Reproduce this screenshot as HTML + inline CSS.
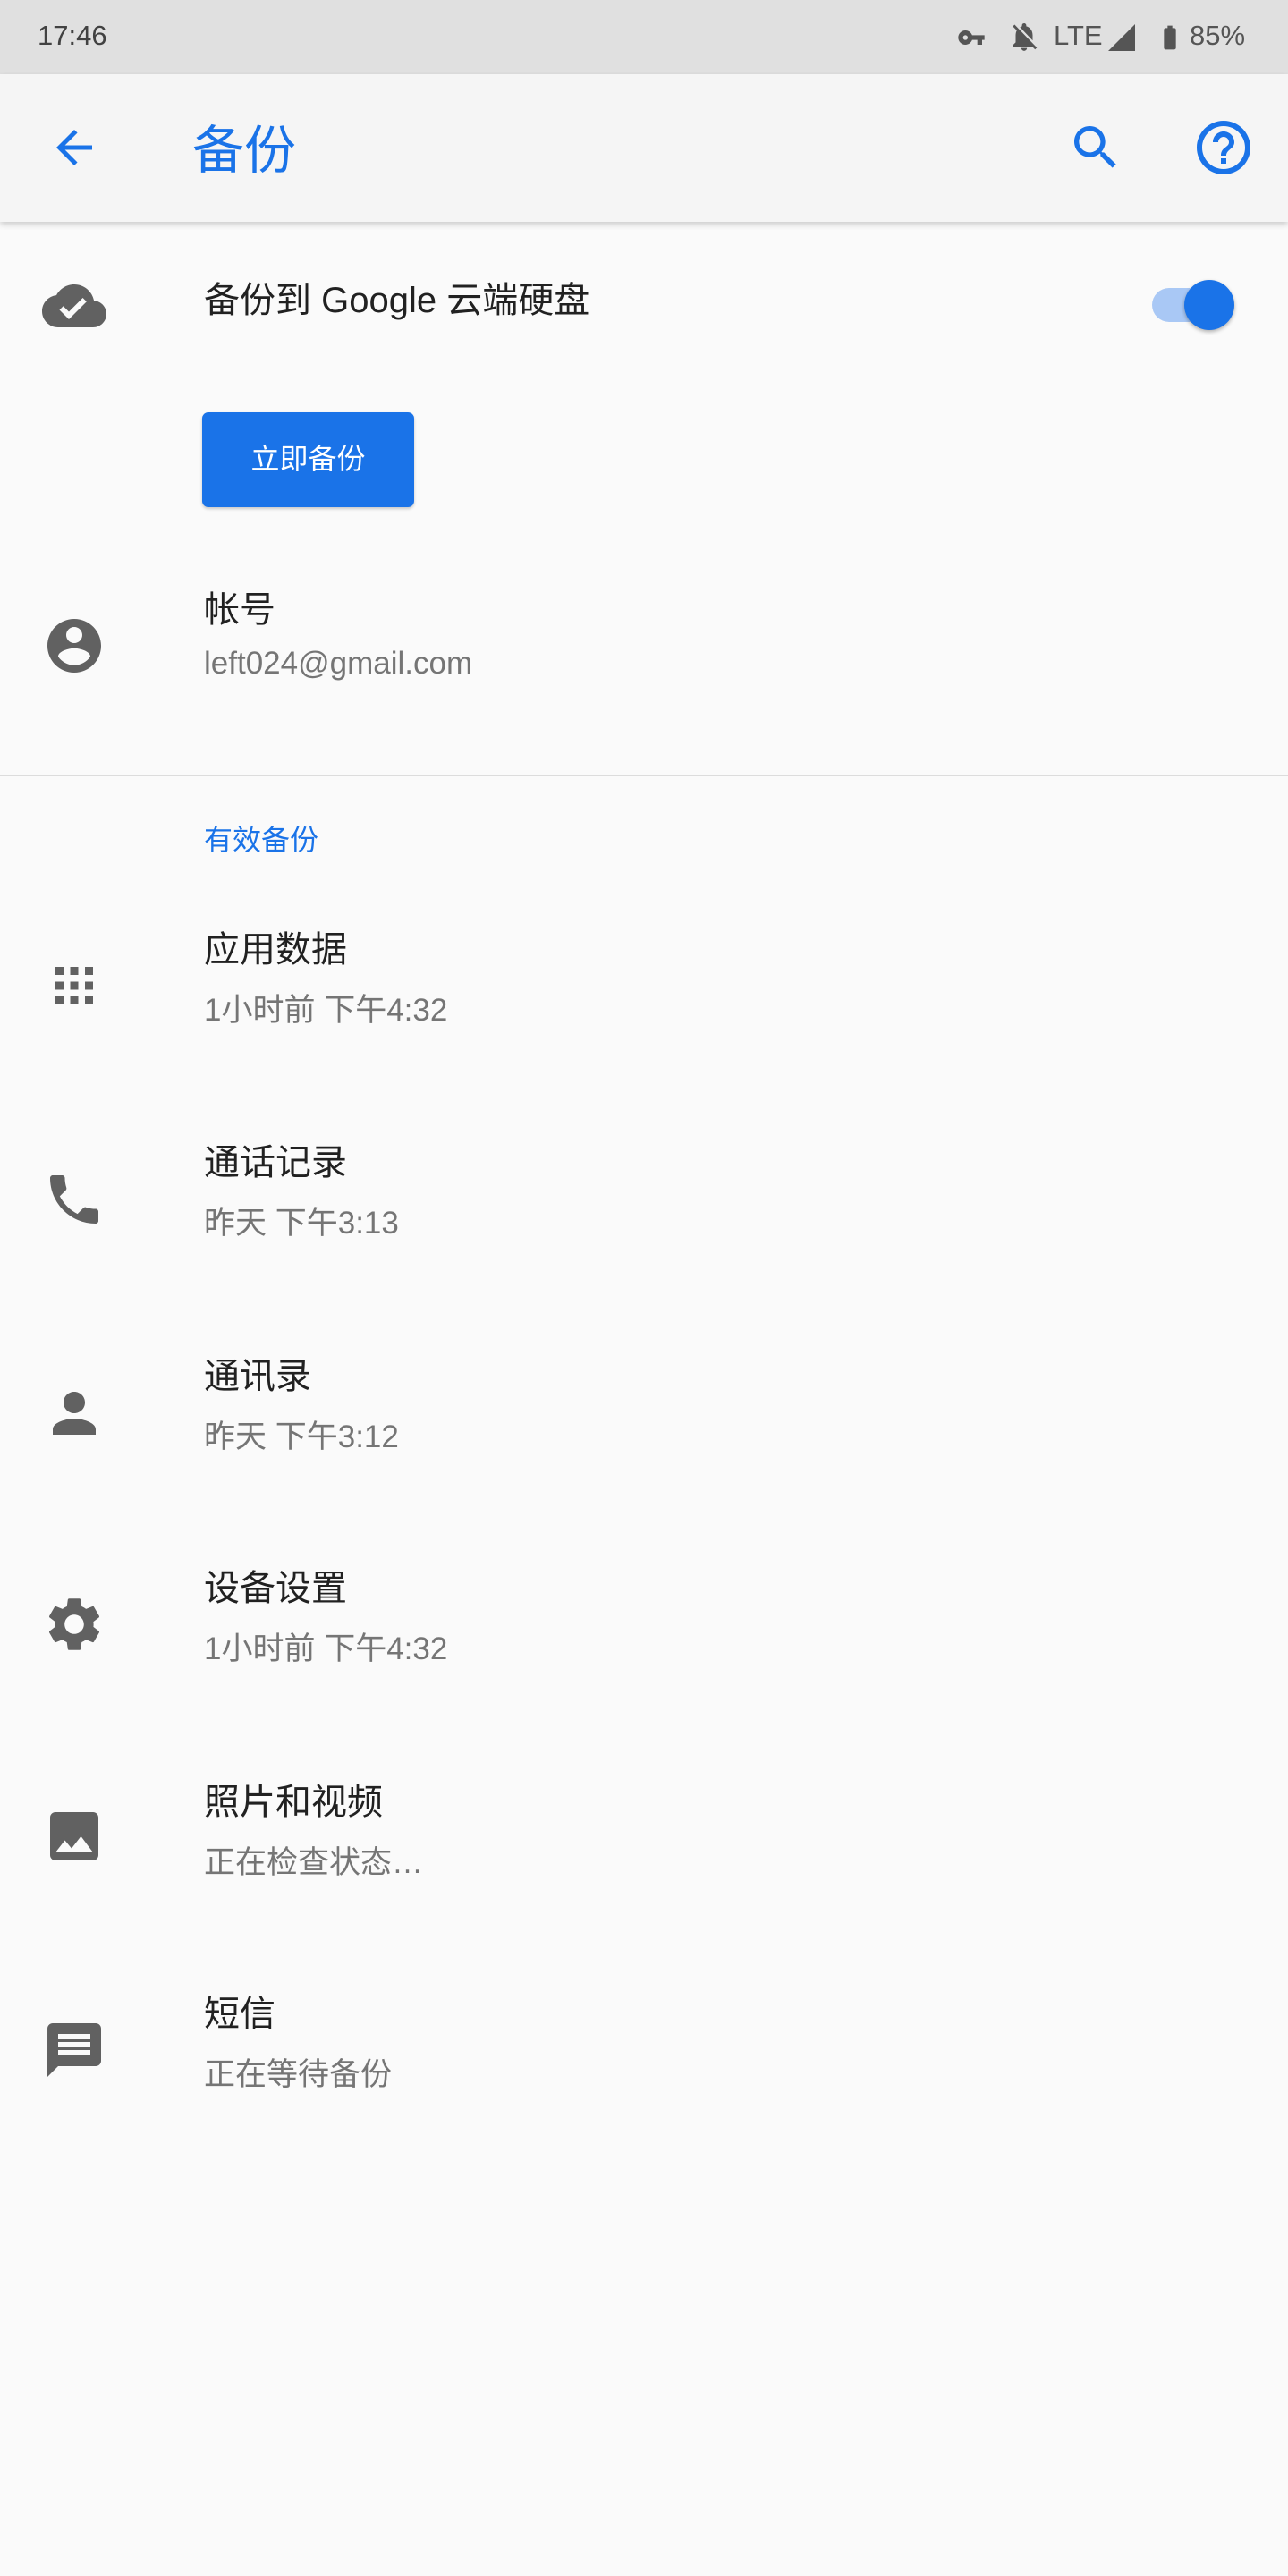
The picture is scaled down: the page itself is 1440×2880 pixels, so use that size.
<!DOCTYPE html>
<html><head><meta charset="utf-8"><style>
*{margin:0;padding:0;box-sizing:border-box}
body{width:1440px;height:2880px;background:#fafafa;position:relative;overflow:hidden;font-family:"Liberation Sans","Noto Sans CJK SC",sans-serif}
.a{position:absolute;white-space:nowrap}
.sb{position:absolute;left:0;top:0;width:1440px;height:83px;background:#e0e0e0}
.tb{position:absolute;left:0;top:83px;width:1440px;height:165px;background:#f5f5f5;box-shadow:0 3px 6px rgba(0,0,0,.18)}
.t{font-size:40px;color:#212121;left:228px}
.s{font-size:35px;color:#757575;left:228px}
svg{position:absolute}
.ic{fill:#616161}
</style></head><body>
<div class="sb"></div>
<div class="a" style="left:42px;top:22px;font-size:31px;color:#424242">17:46</div>
<svg style="left:1066px;top:26px" width="40" height="32" viewBox="0 0 24 24"><path fill="#555" d="M12.65 10C11.83 7.67 9.61 6 7 6c-3.31 0-6 2.69-6 6s2.69 6 6 6c2.610 0 4.83-1.67 5.65-4H17v4h4v-4h2v-4H12.65zM7 14c-1.1 0-2-.9-2-2s.9-2 2-2 2 .9 2 2-.9 2-2 2z"/></svg>
<svg style="left:1126px;top:22px" width="38" height="38" viewBox="0 0 24 24"><path fill="#555" d="M20 18.69L7.84 6.14 5.27 3.49 4 4.76l2.8 2.8v.01c-.52.99-.8 2.16-.8 3.42v5l-2 2v1h13.73l2 2L21 19.72l-1-1.03zM12 22c1.11 0 2-.89 2-2h-4c0 1.11.89 2 2 2zm6-7.32V11c0-3.08-1.64-5.64-4.5-6.32V4c0-.83-.67-1.5-1.5-1.5s-1.5.67-1.5 1.5v.68c-.15.03-.29.08-.42.12-.1.03-.2.07-.3.11h-.01c-.01 0-.01 0-.02.01-.23.09-.46.2-.68.31 0 0-.01 0-.01.01L18 14.68z"/></svg>
<div class="a" style="left:1178px;top:22px;font-size:31px;color:#555">LTE</div>
<svg style="left:1236px;top:24px" width="36" height="36" viewBox="0 0 24 24"><path fill="#555" d="M2 22h20V2z"/></svg>
<svg style="left:1292px;top:22px" width="32" height="40" viewBox="0 0 24 24"><path fill="#555" d="M15.67 4H14V2h-4v2H8.33C7.6 4 7 4.6 7 5.33v15.33C7 21.4 7.6 22 8.33 22h7.33c.74 0 1.34-.6 1.34-1.33V5.33C17 4.6 16.4 4 15.67 4z"/></svg>
<div class="a" style="left:1330px;top:22px;font-size:31px;color:#555">85%</div>

<div class="tb"></div>
<svg style="left:53px;top:135px" width="60" height="60" viewBox="0 0 24 24"><path fill="#1a73e8" d="M20 11H7.83l5.59-5.59L12 4l-8 8 8 8 1.41-1.41L7.83 13H20v-2z"/></svg>
<div class="a" style="left:215px;top:121px;font-size:58px;color:#1a73e8">备份</div>
<svg style="left:1193px;top:133px" width="64" height="64" viewBox="0 0 24 24"><path fill="#1a73e8" d="M15.5 14h-.79l-.28-.27C15.41 12.59 16 11.11 16 9.5 16 5.91 13.09 3 9.5 3S3 5.91 3 9.5 5.91 16 9.5 16c1.61 0 3.09-.59 4.23-1.57l.27.28v.79l5 4.99L20.49 19l-4.99-5zm-6 0C7.01 14 5 11.99 5 9.5S7.01 5 9.5 5 14 7.01 14 9.5 11.99 14 9.5 14z"/></svg>
<svg style="left:1332px;top:129px" width="72" height="72" viewBox="0 0 24 24"><path fill="#1a73e8" d="M11 18h2v-2h-2v2zm1-16C6.48 2 2 6.48 2 12s4.48 10 10 10 10-4.48 10-10S17.52 2 12 2zm0 18c-4.41 0-8-3.59-8-8s3.59-8 8-8 8 3.59 8 8-3.59 8-8 8zm0-14c-2.21 0-4 1.79-4 4h2c0-1.1.9-2 2-2s2 .9 2 2c0 2-3 1.75-3 5h2c0-2.25 3-2.5 3-5 0-2.21-1.79-4-4-4z"/></svg>

<svg style="left:47px;top:306px" width="72" height="72" viewBox="0 0 24 24"><path class="ic" d="M19.35 10.04C18.67 6.59 15.64 4 12 4 9.11 4 6.6 5.64 5.35 8.04 2.34 8.36 0 10.91 0 14c0 3.31 2.69 6 6 6h13c2.76 0 5-2.24 5-5 0-2.64-2.05-4.78-4.65-4.96zM10 17l-3.5-3.5 1.41-1.41L10 14.17 15.18 9l1.41 1.41L10 17z"/></svg>
<div class="a t" style="top:303px">备份到 Google 云端硬盘</div>
<div class="a" style="left:1288px;top:322px;width:72px;height:38px;border-radius:19px;background:#a9c8f5"></div>
<div class="a" style="left:1324px;top:313px;width:56px;height:56px;border-radius:50%;background:#1a73e8;box-shadow:0 2px 4px rgba(0,0,0,.3)"></div>

<div class="a" style="left:226px;top:461px;width:237px;height:106px;background:#1a73e8;border-radius:7px;box-shadow:0 2px 3px rgba(0,0,0,.2);color:#fff;font-size:32px;text-align:center;line-height:104px">立即备份</div>

<svg style="left:47px;top:686px" width="72" height="72" viewBox="0 0 24 24"><path class="ic" d="M12 2C6.48 2 2 6.48 2 12s4.48 10 10 10 10-4.48 10-10S17.52 2 12 2zm0 3c1.66 0 3 1.34 3 3s-1.34 3-3 3-3-1.34-3-3 1.34-3 3-3zm0 14.2c-2.5 0-4.71-1.28-6-3.22.03-1.99 4-3.08 6-3.08 1.99 0 5.97 1.09 6 3.08-1.29 1.94-3.5 3.22-6 3.22z"/></svg>
<div class="a t" style="top:649px">帐号</div>
<div class="a s" style="top:722px">left024@gmail.com</div>

<div class="a" style="left:0;top:866px;width:1440px;height:2px;background:#dcdcdc"></div>
<div class="a" style="left:228px;top:914px;font-size:32px;color:#1a73e8">有效备份</div>

<svg style="left:47px;top:1066px" width="72" height="72" viewBox="0 0 24 24"><path class="ic" d="M5 8h3V5H5v3zm5.5 11h3v-3h-3v3zM5 19h3v-3H5v3zm0-5.5h3v-3H5v3zm5.5 0h3v-3h-3v3zM16 5v3h3V5h-3zm-5.5 3h3V5h-3v3zM16 13.5h3v-3h-3v3zm0 5.5h3v-3h-3v3z"/></svg>
<div class="a t" style="top:1029px">应用数据</div>
<div class="a s" style="top:1101px">1小时前 下午4:32</div>

<svg style="left:47px;top:1305px" width="72" height="72" viewBox="0 0 24 24"><path class="ic" d="M6.62 10.79c1.44 2.83 3.76 5.14 6.59 6.59l2.2-2.2c.27-.27.67-.36 1.02-.24 1.12.37 2.33.57 3.57.57.55 0 1 .45 1 1V20c0 .55-.45 1-1 1-9.39 0-17-7.61-17-17 0-.55.45-1 1-1h3.5c.55 0 1 .45 1 1 0 1.25.2 2.45.57 3.57.11.35.03.74-.25 1.02l-2.2 2.2z"/></svg>
<div class="a t" style="top:1267px">通话记录</div>
<div class="a s" style="top:1339px">昨天 下午3:13</div>

<svg style="left:47px;top:1544px" width="72" height="72" viewBox="0 0 24 24"><path class="ic" d="M12 12c2.21 0 4-1.79 4-4s-1.79-4-4-4-4 1.79-4 4 1.79 4 4 4zm0 2c-2.67 0-8 1.34-8 4v2h16v-2c0-2.66-5.33-4-8-4z"/></svg>
<div class="a t" style="top:1506px">通讯录</div>
<div class="a s" style="top:1578px">昨天 下午3:12</div>

<svg style="left:47px;top:1780px" width="72" height="72" viewBox="0 0 24 24"><path class="ic" d="M19.14 12.94c.04-.3.06-.61.06-.94 0-.32-.02-.64-.07-.94l2.03-1.58c.18-.14.23-.41.12-.61l-1.92-3.32c-.12-.22-.37-.29-.59-.22l-2.39.96c-.5-.38-1.03-.7-1.62-.94l-.36-2.54c-.04-.24-.24-.41-.48-.41h-3.84c-.24 0-.43.17-.47.41l-.36 2.54c-.59.24-1.13.57-1.62.94l-2.39-.96c-.22-.08-.47 0-.59.22L2.74 8.87c-.12.21-.08.47.12.61l2.03 1.58c-.05.3-.09.63-.09.94s.02.64.07.94l-2.03 1.58c-.18.14-.23.41-.12.61l1.92 3.32c.12.22.37.29.59.22l2.39-.96c.5.38 1.03.7 1.62.94l.36 2.54c.05.24.24.41.48.41h3.84c.24 0 .44-.17.47-.41l.36-2.54c.59-.24 1.13-.56 1.62-.94l2.39.96c.22.08.47 0 .59-.22l1.92-3.32c.12-.22.07-.47-.12-.61l-2.01-1.58zM12 15.6c-1.98 0-3.6-1.62-3.6-3.6s1.62-3.6 3.6-3.6 3.6 1.62 3.6 3.6-1.62 3.6-3.6 3.6z"/></svg>
<div class="a t" style="top:1743px">设备设置</div>
<div class="a s" style="top:1815px">1小时前 下午4:32</div>

<svg style="left:47px;top:2017px" width="72" height="72" viewBox="0 0 24 24"><path class="ic" d="M21 19V5c0-1.1-.9-2-2-2H5c-1.1 0-2 .9-2 2v14c0 1.1.9 2 2 2h14c1.1 0 2-.9 2-2zM8.5 13.5l2.5 3.01L14.5 12l4.5 6H5l3.5-4.5z"/></svg>
<div class="a t" style="top:1982px">照片和视频</div>
<div class="a s" style="top:2054px">正在检查状态…</div>

<svg style="left:47px;top:2256px" width="72" height="72" viewBox="0 0 24 24"><path class="ic" d="M20 2H4c-1.1 0-1.99.9-1.99 2L2 22l4-4h14c1.1 0 2-.9 2-2V4c0-1.1-.9-2-2-2zm-2 12H6v-2h12v2zm0-3H6V9h12v2zm0-3H6V6h12v2z"/></svg>
<div class="a t" style="top:2219px">短信</div>
<div class="a s" style="top:2291px">正在等待备份</div>
</body></html>
